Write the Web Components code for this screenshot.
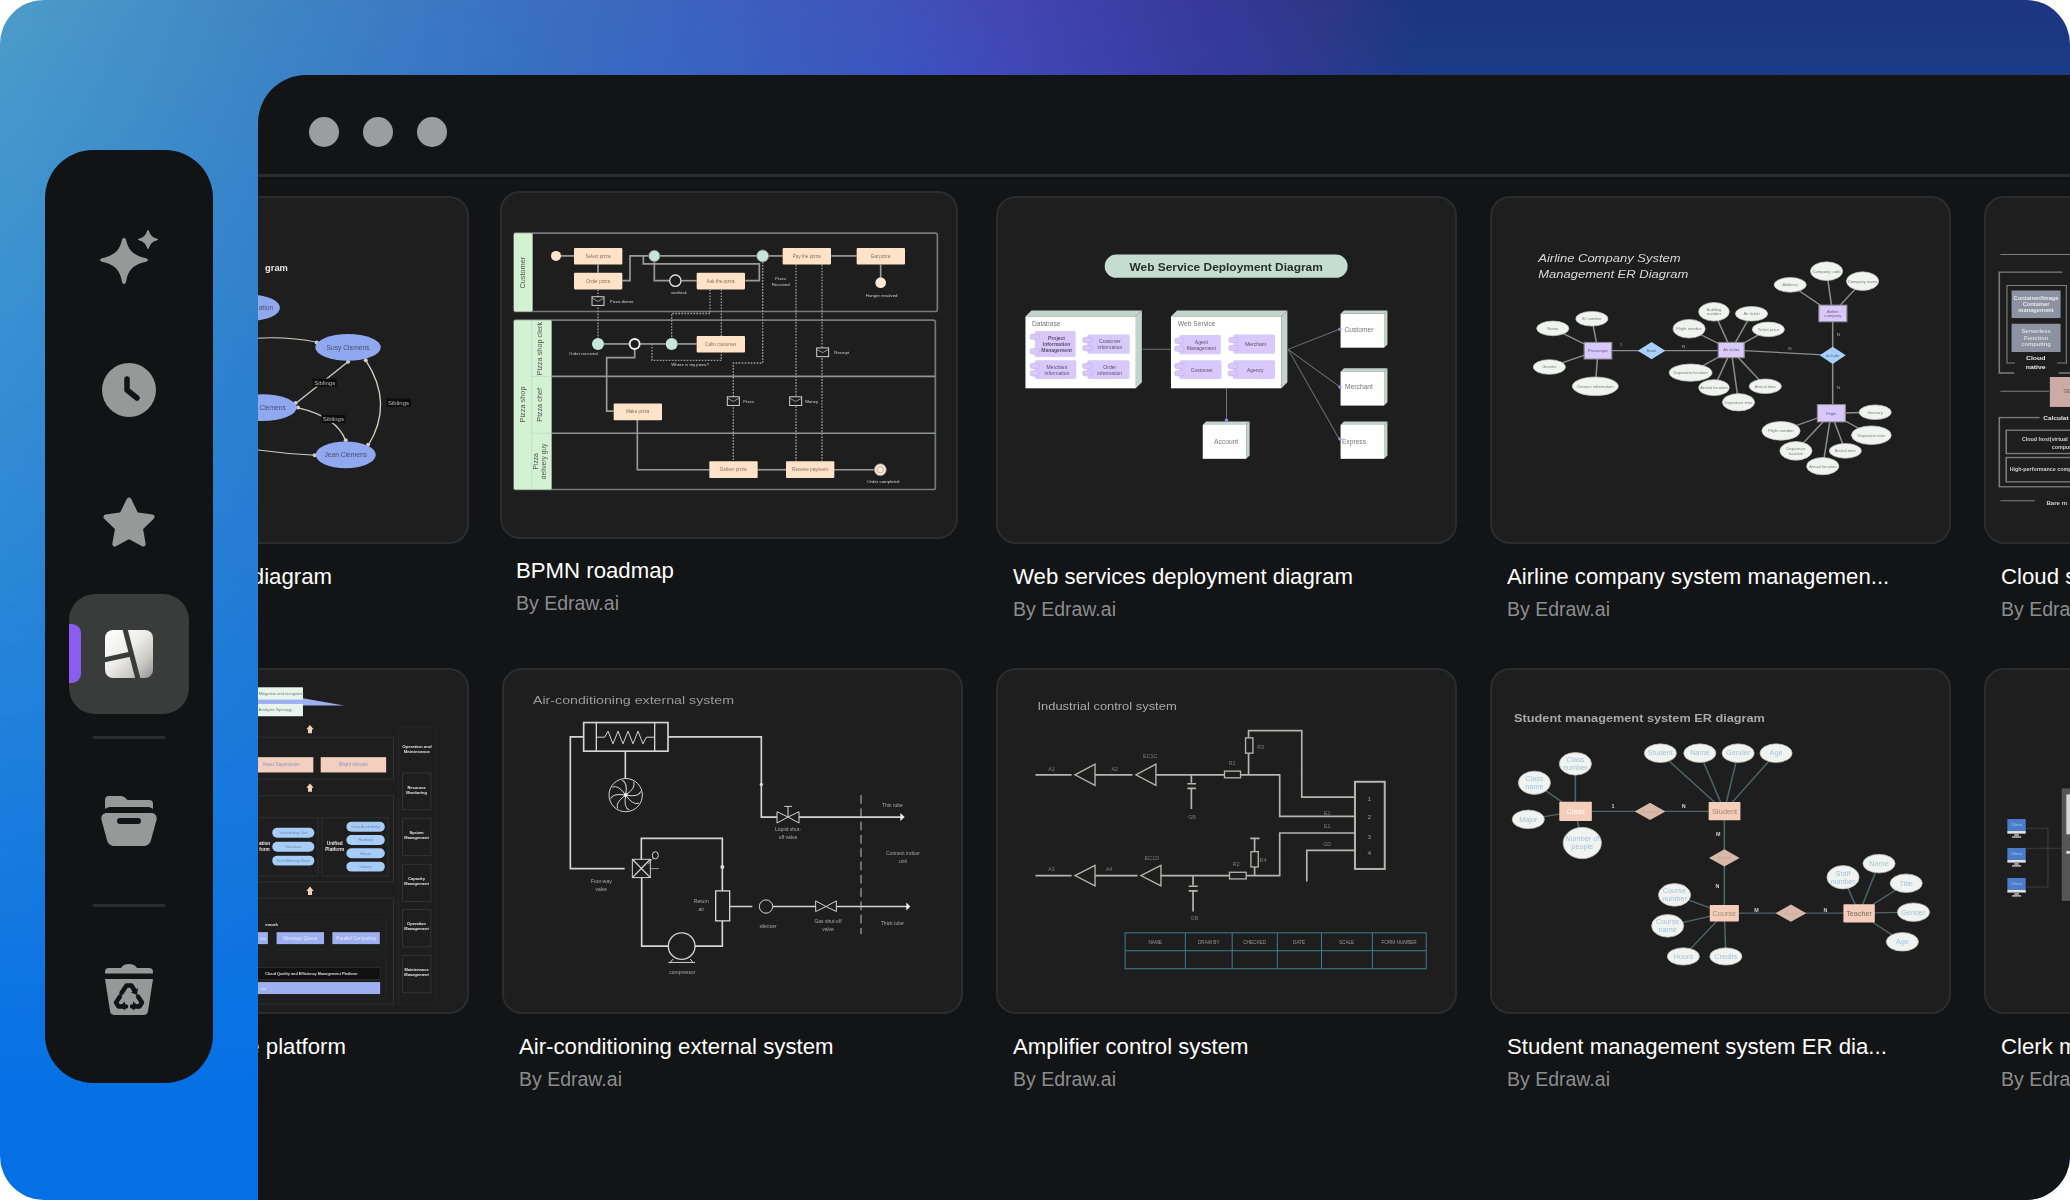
<!DOCTYPE html>
<html lang="en">
<head>
<meta charset="utf-8">
<title>Templates</title>
<style>
  html, body { margin: 0; background: #fff; }
</style>
</head>
<body>
<app-frame>
  <side-rail slot="rail">
    <rail-item>
      <svg width="58" height="56" viewBox="0 0 58 56">
        <path fill="#979999" d="M24 8c1.3 0 2 1 2.400 3 1.800 8.600 7.200 14 16.600 16.400 3 .7 5 1.300 5 2.600s-2 1.900-5 2.600C33.600 35 28.200 40.400 26.400 50c-.4 2.500-1.100 4-2.400 4s-2-1.500-2.400-4C19.800 40.400 14.400 35 5 32.600 2 31.900 0 31.300 0 30s2-1.900 5-2.600C14.400 25 19.800 19.600 21.600 11c.4-2 1.100-3 2.400-3z"/>
        <path fill="#979999" d="M48 0c.6 0 .9.700 1.300 1.900.9 3 3.300 5.300 7.100 6.500 1 .4 1.600.6 1.600 1.100s-.6.800-1.600 1.100c-3.800 1.200-6.200 3.500-7.100 6.500-.4 1.200-.7 1.900-1.300 1.900s-.9-.7-1.300-1.900c-.9-3-3.300-5.300-7.100-6.500-1-.3-1.600-.6-1.600-1.100s.6-.7 1.600-1.100c3.800-1.200 6.200-3.500 7.100-6.500C47.100.7 47.400 0 48 0z"/>
      </svg>
    </rail-item>
    <rail-item>
      <svg width="54" height="54" viewBox="0 0 54 54">
        <circle cx="27" cy="27" r="27" fill="#979999"/>
        <path d="M25 16v11l10 8" fill="none" stroke="#121315" stroke-width="5.500" stroke-linecap="round" stroke-linejoin="round"/>
      </svg>
    </rail-item>
    <rail-item>
      <svg width="52" height="50" viewBox="0 0 52 50">
        <path fill="#979999" stroke="#979999" stroke-width="5" stroke-linejoin="round" d="M26 3l7 14.600 16 2.300-11.600 11.200 2.800 16L26 39.400 11.800 47.100l2.800-16L3 19.900l16-2.300z"/>
      </svg>
    </rail-item>
    <rail-item active>
      <svg width="48" height="48" viewBox="0 0 48 48">
        <defs>
          <linearGradient id="logoFill" x1="0" y1="0" x2="1" y2="1">
            <stop offset="0" stop-color="#ffffff"/>
            <stop offset=".45" stop-color="#ededea"/>
            <stop offset=".75" stop-color="#c9c6c2"/>
            <stop offset="1" stop-color="#8f9090"/>
          </linearGradient>
        </defs>
        <rect width="48" height="48" rx="8" fill="url(#logoFill)"/>
        <path d="M20 -1L33 49" stroke="#3a3b3b" stroke-width="5" fill="none"/>
        <path d="M-1 30L26 24" stroke="#3a3b3b" stroke-width="5" fill="none"/>
      </svg>
    </rail-item>
    <rail-divider></rail-divider>
    <rail-item>
      <svg width="56" height="50" viewBox="0 0 56 50">
        <path fill="#979999" d="M4 13V4a4 4 0 0 1 4-4h12c2 0 3 .7 4.500 2l2 2H48a4 4 0 0 1 4 4v5c-2-1.500-4-2-6-2H10c-2 0-4 .5-6 2z"/>
        <path fill="#979999" d="M6 17h44c4 0 6.500 3 5.500 7L50 44c-1 4-4 6-8 6H14c-4 0-7-2-8-6L.5 24C-.5 20 2 17 6 17z"/>
        <rect x="16" y="22" width="24" height="6" rx="3" fill="#121315"/>
      </svg>
    </rail-item>
    <rail-divider style="margin-top:11px"></rail-divider>
    <rail-item>
      <svg width="48" height="51" viewBox="0 0 48 51">
        <path fill="#979999" d="M16 4c1.500-2.500 4-4 8-4s6.500 1.500 8 4h12a4 4 0 0 1 4 4v1.500H0V8a4 4 0 0 1 4-4z"/>
        <path fill="#979999" d="M0 15h48l-5 32c-.4 2.500-2 4-4.500 4h-29C7 51 5.400 49.500 5 47z"/>
        <g fill="none" stroke="#121315" stroke-width="4.500" stroke-linecap="round" stroke-linejoin="round">
          <path d="M16.500 29l5-7.500h5l3 5"/>
          <path d="M15 32.500l-4 6 2.500 4H21"/>
          <path d="M33 32.500l4 6-2.500 4H27"/>
        </g>
        <g fill="#121315">
          <path d="M33 24l-1 7-6-2.500z"/>
          <path d="M20 37.500v9l-5.500-4.500z"/>
          <path d="M28 37.500v9l5.500-4.500z"/>
        </g>
      </svg>
    </rail-item>
  </side-rail>

  <app-window slot="main">
    <template-card clipped author="" style="--name-width:307px" name="diagram"><diagram-thumb kind="family"></diagram-thumb></template-card>
    <template-card lifted name="BPMN roadmap"><diagram-thumb kind="bpmn"></diagram-thumb></template-card>
    <template-card name="Web services deployment diagram"><diagram-thumb kind="deploy"></diagram-thumb></template-card>
    <template-card name="Airline company system managemen..."><diagram-thumb kind="airline"></diagram-thumb></template-card>
    <template-card name="Cloud service architecture"><diagram-thumb kind="cloud"></diagram-thumb></template-card>
    <template-card clipped author="" style="--name-width:321px;--thumb-h:346px" name="e platform"><diagram-thumb kind="platform"></diagram-thumb></template-card>
    <template-card style="--thumb-h:346px" name="Air-conditioning external system"><diagram-thumb kind="aircon"></diagram-thumb></template-card>
    <template-card style="--thumb-h:346px" name="Amplifier control system"><diagram-thumb kind="amp"></diagram-thumb></template-card>
    <template-card style="--thumb-h:346px" name="Student management system ER dia..."><diagram-thumb kind="student"></diagram-thumb></template-card>
    <template-card style="--thumb-h:346px" name="Clerk management network"><diagram-thumb kind="clerk"></diagram-thumb></template-card>
  </app-window>
</app-frame>

<script>
class AppFrame extends HTMLElement {
    constructor() {
        super();
        this.shadow = this.attachShadow({ mode: 'open' });
    }

    connectedCallback() {
        this.shadow.innerHTML = `
            <style>
                :host {
                    display: grid;
                    grid-template-columns: 258px 1fr;
                    width: 2070px;
                    height: 1200px;
                    border-radius: 44px;
                    overflow: hidden;
                    background:
                        linear-gradient(180deg, rgba(5,112,230,0) 0%, rgba(5,112,230,.5) 50%, #0570e6 92%),
                        linear-gradient(90deg, #4c9cc9 0, #3f86c4 260px, #3a70c0 520px, #3f52bc 900px, #4345b4 1010px, #38389a 1200px, #2f3688 1320px, #1c3680 1420px, #1c3680 100%);
                }
                .left {
                    padding: 150px 0 0 45px;
                }
                .right {
                    padding-top: 75px;
                    min-width: 0;
                    display: flex;
                }
            </style>
            <div class="left"><slot name="rail"></slot></div>
            <div class="right"><slot name="main"></slot></div>
        `;
    }
}

class SideRail extends HTMLElement {
    constructor() {
        super();
        this.shadow = this.attachShadow({ mode: 'open' });
    }

    connectedCallback() {
        this.shadow.innerHTML = `
            <style>
                :host {
                    display: flex;
                    flex-direction: column;
                    align-items: center;
                    gap: 12px;
                    box-sizing: border-box;
                    width: 168px;
                    height: 933px;
                    padding-top: 48px;
                    border-radius: 48px;
                    background: #121315;
                }
            </style>
            <slot></slot>
        `;
    }
}

class RailItem extends HTMLElement {
    constructor() {
        super();
        this.shadow = this.attachShadow({ mode: 'open' });
    }

    connectedCallback() {
        this.shadow.innerHTML = `
            <style>
                :host {
                    position: relative;
                    display: flex;
                    flex: none;
                    align-items: center;
                    justify-content: center;
                    width: 120px;
                    height: 120px;
                    border-radius: 26px;
                }
                :host([active]) {
                    background: #3a3b3b;
                }
                :host([active])::before {
                    content: '';
                    position: absolute;
                    left: 0;
                    top: 30px;
                    width: 12px;
                    height: 59px;
                    border-radius: 0 9px 9px 0;
                    background: #8b5cf0;
                }
            </style>
            <slot></slot>
        `;
    }
}

class RailDivider extends HTMLElement {
    constructor() {
        super();
        this.shadow = this.attachShadow({ mode: 'open' });
    }

    connectedCallback() {
        this.shadow.innerHTML = `
            <style>
                :host {
                    display: block;
                    flex: none;
                    width: 72px;
                    height: 3px;
                    margin: 10px 0;
                    background: #2a2b2d;
                }
            </style>
        `;
    }
}

class AppWindow extends HTMLElement {
    constructor() {
        super();
        this.shadow = this.attachShadow({ mode: 'open' });
    }

    connectedCallback() {
        this.shadow.innerHTML = `
            <style>
                :host {
                    display: block;
                    flex: 1;
                    min-width: 0;
                    overflow: hidden;
                    border-radius: 48px 0 0 0;
                    background: #131415;
                }
                .bar {
                    display: flex;
                    gap: 24px;
                    padding: 42px 0 27px 51px;
                    border-bottom: 3px solid #2a2b2d;
                }
                .dot {
                    width: 30px;
                    height: 30px;
                    border-radius: 50%;
                    background: #9b9e9f;
                }
                .grid {
                    display: grid;
                    grid-template-columns: repeat(5, 461px);
                    gap: 46px 33px;
                    margin-left: -250px;
                    padding-top: 19px;
                }
            </style>
            <div class="bar">
                <span class="dot"></span>
                <span class="dot"></span>
                <span class="dot"></span>
            </div>
            <div class="grid"><slot></slot></div>
        `;
    }
}

class TemplateCard extends HTMLElement {
    constructor() {
        super();
        this.shadow = this.attachShadow({ mode: 'open' });
    }

    connectedCallback() {
        const name = this.getAttribute('name');
        const author = this.hasAttribute('author') ? this.getAttribute('author') : 'By Edraw.ai';
        this.shadow.innerHTML = `
            <style>
                :host {
                    display: block;
                    min-width: 0;
                    font-family: "Liberation Sans", Arial, sans-serif;
                }
                :host([lifted]) {
                    transform: translate(-2px, -5px);
                }
                :host([lifted]) .thumb {
                    width: 458px;
                }
                :host([lifted]) .name {
                    margin: 17px 0 0 16px;
                }
                :host([lifted]) .by {
                    margin-left: 16px;
                }
                .thumb {
                    height: var(--thumb-h, 348px);
                    overflow: hidden;
                    border-radius: 20px;
                    background: #1e1e1f;
                    box-shadow: inset 0 0 0 2px #2b2c2d;
                }
                .name {
                    margin: 18px 0 0 17px;
                    font-size: 22.2px;
                    line-height: 30px;
                    color: #fff;
                    white-space: nowrap;
                }
                :host([clipped]) .name {
                    width: var(--name-width);
                    text-align: right;
                }
                .by {
                    min-height: 26px;
                    margin: 4px 0 0 17px;
                    font-size: 19.5px;
                    line-height: 26px;
                    color: #8b8d8f;
                    white-space: nowrap;
                }
            </style>
            <div class="thumb"><slot></slot></div>
            <div class="name">${name}</div>
            <div class="by">${author}</div>
        `;
    }
}

// small svg helpers, coordinates are the ones read off the zoomed reference
const txt = (x, y, s, o = {}) => `<text x="${x}" y="${y}" font-size="${o.size || 14}" fill="${o.fill || '#c8c8c8'}"
    text-anchor="${o.anchor || 'middle'}" dominant-baseline="central"
    font-weight="${o.bold ? 700 : 400}" font-style="${o.italic ? 'italic' : 'normal'}"
    ${o.len ? `textLength="${o.len}" lengthAdjust="spacingAndGlyphs"` : ''}
    ${o.rot ? `transform="rotate(${o.rot} ${x} ${y})"` : ''}>${s}</text>`;
const lines = (x, y, s, o = {}) => {
    const parts = s.split('|');
    const step = o.step || (o.size || 14) * 1.25;
    return parts.map((p, i) => txt(x, y + (i - (parts.length - 1) / 2) * step, p, o)).join('');
};
const box = (x1, y1, x2, y2, fill = 'none', stroke = 'none', sw = 2, r = 0) =>
    `<rect x="${x1}" y="${y1}" width="${x2 - x1}" height="${y2 - y1}" rx="${r}" fill="${fill}" stroke="${stroke}" stroke-width="${sw}"/>`;
const ell = (cx, cy, rx, ry, fill = 'none', stroke = 'none', sw = 2) =>
    `<ellipse cx="${cx}" cy="${cy}" rx="${rx}" ry="${ry}" fill="${fill}" stroke="${stroke}" stroke-width="${sw}"/>`;
const line = (d, stroke = '#888', sw = 3, dash = '') =>
    `<path d="${d}" fill="none" stroke="${stroke}" stroke-width="${sw}" ${dash ? `stroke-dasharray="${dash}"` : ''}/>`;
const poly = (pts, fill = 'none', stroke = 'none', sw = 2) =>
    `<polygon points="${pts}" fill="${fill}" stroke="${stroke}" stroke-width="${sw}"/>`;
const diamond = (cx, cy, rx, ry, fill, stroke = 'none') =>
    poly(`${cx - rx},${cy} ${cx},${cy - ry} ${cx + rx},${cy} ${cx},${cy + ry}`, fill, stroke);

const er = (hx, hy, items, o) => items.map(([cx, cy, rx, ry]) =>
    line(`M${hx} ${hy}L${cx} ${cy}`, o.line, 4)).join('') +
    items.map(([cx, cy, rx, ry, s]) =>
        ell(cx, cy, rx, ry, o.fill, o.stroke, 2) + lines(cx, cy, s, { size: o.size, fill: o.text })).join('');

const DIAGRAMS = {
    family: {
        view: '-726 16 1380 1046',
        draw() {
            const blue = '#8fa8f0';
            const ink = '#47506e';
            const edge = '#cfcfc8';
            const tip = (x, y) => ell(x, y, 6, 6, edge);
            return txt(112, 233, 'gram', { size: 28, fill: '#e8e8e8', anchor: 'end', bold: true })
                + line('M-60 450Q90 432 200 456', edge, 3)
                + line('M-40 770Q80 790 195 795', edge, 3)
                + line('M292 514L135 640', edge, 4)
                + line('M140 652Q260 680 285 752', edge, 4)
                + line('M345 510Q430 640 352 766', edge, 4)
                + tip(292, 514) + tip(135, 638) + tip(142, 652) + tip(285, 750) + tip(345, 510) + tip(352, 764) + tip(198, 456) + tip(192, 795)
                + ell(292, 471, 98, 40, blue) + txt(292, 471, 'Susy Clemens', { size: 20, fill: ink })
                + ell(285, 794, 90, 40, blue) + txt(285, 794, 'Jean Clemens', { size: 20, fill: ink })
                + ell(36, 652, 102, 40, blue) + txt(66, 652, 'Clemens', { size: 20, fill: ink })
                + ell(0, 352, 88, 39, blue) + txt(46, 352, 'ation', { size: 20, fill: ink })
                + [[222, 577], [248, 686], [443, 637]].map(([x, y]) =>
                    box(x - 36, y - 12, x + 36, y + 12, '#0c0c0c') + txt(x, y, 'Siblings', { size: 18, fill: '#bdbdbd' })).join('');
        }
    },

    bpmn: {
        view: '60 64 1374 1040',
        draw() {
            const g = '#d3f2d4';
            const peach = '#ffe3c8';
            const ln = '#9a9a98';
            const ink = '#8a6d5a';
            const tasks = [[282, 234, 'Select pizza'], [282, 308, 'Order pizza'], [650, 308, 'Ask the pizza'], [908, 234, 'Pay the pizza'],
                [1130, 234, 'Eat pizza'], [650, 497, 'Calm customer'], [401, 699, 'Make pizza'], [688, 872, 'Deliver pizza'], [918, 872, 'Receive payment']];
            const paths = ['M228 258H282', 'M354 284V308', 'M427 332H450V258H505', 'M540 258H830', 'M866 258H908', 'M1054 258H1130', 'M1202 284V322',
                'M523 275V332H568', 'M604 332H650', 'M796 332H838V282H490V258', 'M372 521H446', 'M482 521H557', 'M593 521H650', 'M464 539V562H380V722H401',
                'M472 748V897H688', 'M832 897H918', 'M1062 897H1183'];
            const dashed = ['M354 358V503', 'M690 358V430H575V503', 'M724 358V497', 'M848 276V578H760V872', 'M948 284V872', 'M1026 284V872', 'M516 521V570H724V547'];
            const env = (x, y) => box(x - 18, y - 13, x + 18, y + 13, '#1e1e1f', '#cfcfcf', 3) + line(`M${x - 18} ${y - 9}L${x} ${y + 1}L${x + 18} ${y - 9}`, '#cfcfcf', 2);
            const small = [[425, 395, 'Pizza dinner'], [597, 367, 'wait/ask'], [902, 335, 'Pizza|Received'], [1205, 375, 'Hunger resolved'], [310, 551, 'Order received'],
                [630, 583, 'Where is my pizza?'], [1085, 547, 'Receipt'], [806, 692, 'Pizza'], [995, 692, 'Money'], [1210, 933, 'Order completed']];
            return box(102, 190, 1372, 424, 'none', '#777879', 5, 6)
                + box(102, 450, 1366, 956, 'none', '#777879', 5, 6)
                + line('M215 618H1366M215 788H1366', '#929394', 5)
                + box(102, 190, 158, 424, g, 'none', 0, 4) + box(102, 450, 215, 956, g, 'none', 0, 4)
                + line('M155 450V956M155 618H215M155 788H215', '#9cbfa0', 2, '3 3')
                + txt(128, 308, 'Customer', { size: 22, fill: '#555', rot: -90 })
                + txt(128, 702, 'Pizza shop', { size: 22, fill: '#555', rot: -90 })
                + txt(180, 535, 'Pizza shop clerk', { size: 22, fill: '#555', rot: -90 })
                + txt(180, 703, 'Pizza chef', { size: 22, fill: '#555', rot: -90 })
                + txt(168, 872, 'Pizza', { size: 20, fill: '#555', rot: -90 })
                + txt(192, 872, 'delivery guy', { size: 20, fill: '#555', rot: -90 })
                + paths.map(d => line(d, ln, 5)).join('')
                + dashed.map(d => line(d, ln, 4, '5 4')).join('')
                + tasks.map(([x, y, s]) => box(x, y, x + 145, y + 50, peach, 'none', 0, 3) + txt(x + 72, y + 25, s, { size: 14, fill: ink })).join('')
                + ell(228, 258, 15, 15, peach) + ell(1202, 338, 16, 16, '#ffe9d6')
                + ell(523, 258, 17, 17, '#c7e6d8', '#777', 2) + ell(848, 258, 18, 18, '#c7e6d8', '#888', 2)
                + ell(586, 332, 17, 17, '#1e1e1f', '#e6e6e6', 4)
                + ell(354, 521, 18, 18, '#c7e6d8') + ell(575, 521, 18, 18, '#c7e6d8')
                + ell(464, 521, 15, 15, '#1e1e1f', '#eeeeee', 6)
                + ell(1201, 897, 18, 18, '#ffe3c8', '#888', 2) + ell(1201, 897, 9, 9, '#f6efe6', '#999', 2)
                + [[354, 393], [1028, 546], [760, 692], [947, 692]].map(([x, y]) => env(x, y)).join('')
                + small.map(([x, y, s]) => lines(x, y, s, { size: 13, fill: '#d0d0d0' })).join('');
        }
    },

    deploy: {
        view: '52 76 1378 1046',
        draw() {
            const side = '#c3d4ca';
            const node = (x1, y1, x2, y2, d) =>
                poly(`${x1},${y1} ${x1 + d},${y1 - d} ${x2 + d},${y1 - d} ${x2},${y1}`, side)
                + poly(`${x2},${y1} ${x2 + d},${y1 - d} ${x2 + d},${y2 - d} ${x2},${y2}`, side)
                + box(x1, y1, x2, y2, '#ffffff');
            const comp = (x1, y1, x2, y2, s, bold) =>
                box(x1, y1, x2, y2, '#d8c8fb', 'none', 0, 5)
                + box(x1 - 14, y1 + 9, x1 + 14, y1 + 25, '#d8c8fb', '#b9a8e6', 1.500, 6)
                + box(x1 - 14, y2 - 25, x1 + 14, y2 - 9, '#d8c8fb', '#b9a8e6', 1.500, 6)
                + lines((x1 + x2) / 2 + 4, (y1 + y2) / 2, s, { size: 15, fill: '#5a5368', bold });
            return box(377, 252, 1103, 322, '#c5dcd0', 'none', 0, 35)
                + txt(740, 290, 'Web Service Deployment Diagram', { size: 33, fill: '#26302b', bold: true, len: 578 })
                + line('M490 537H575M925 537L1080 476M925 537L1080 650M925 537L1080 810M741 654V750', '#6f7173', 3)
                + node(140, 438, 470, 654, 18) + node(575, 438, 905, 654, 18)
                + node(1082, 430, 1212, 532, 10) + node(1082, 604, 1212, 706, 10) + node(1082, 764, 1212, 866, 10) + node(670, 764, 800, 866, 10)
                + txt(202, 458, 'Database', { size: 20, fill: '#777' }) + txt(652, 458, 'Web Service', { size: 20, fill: '#777' })
                + txt(1137, 476, 'Customer', { size: 20, fill: '#777' }) + txt(1137, 648, 'Merchant', { size: 20, fill: '#777' })
                + txt(1122, 814, 'Express', { size: 20, fill: '#777' }) + txt(740, 814, 'Account', { size: 20, fill: '#777' })
                + comp(168, 482, 290, 560, 'Project|Information|Management', true)
                + comp(325, 492, 452, 550, 'Customer|information')
                + comp(168, 570, 292, 626, 'Merchant|information')
                + comp(325, 570, 451, 626, 'Order|information')
                + comp(600, 494, 724, 552, 'Agent|Management')
                + comp(762, 492, 886, 550, 'Merchant')
                + comp(600, 570, 726, 626, 'Customer')
                + comp(760, 570, 886, 626, 'Agency')
                + [[1080, 476], [1080, 650], [1080, 806], [741, 750]].map(([x, y]) => ell(x, y, 5, 5, '#8a90e8')).join('');
        }
    },

    airline: {
        view: '52 76 1204 1046',
        draw() {
            const o = { fill: '#f0f3f0', stroke: '#c4cac4', line: '#8d8d8d', size: 11, text: '#808080' };
            const entity = (x1, y1, x2, y2, s) => box(x1, y1, x2, y2, '#d8c8fb', '#8e8e8e', 3) + lines((x1 + x2) / 2, (y1 + y2) / 2, s, { size: 11, fill: '#6a6080' });
            const rel = (x, y, rx, ry, s) => diamond(x, y, rx, ry, '#a8d0ff') + txt(x, y, s, { size: 11, fill: '#5a6a88' });
            return txt(178, 263, 'Airline Company System', { size: 35, fill: '#d8d8d8', anchor: 'start', italic: true, len: 372 })
                + txt(178, 312, 'Management ER Diagram', { size: 35, fill: '#d8d8d8', anchor: 'start', italic: true, len: 392 })
                + line('M370 541H648M716 541L947 555M947 454V703', '#8d8d8d', 4)
                + er(334, 541, [[216, 474, 42, 22, 'Name'], [318, 445, 42, 22, 'ID number'], [207, 590, 42, 22, 'Gender'], [327, 648, 60, 28, 'Contact information']], o)
                + er(682, 539, [[637, 424, 40, 28, 'Building|number'], [735, 430, 42, 22, 'Air ticket'], [779, 477, 42, 22, 'Ticket price'], [572, 475, 42, 28, 'Flight number'],
                    [576, 607, 56, 26, 'Departure location'], [637, 652, 40, 24, 'Arrival location'], [771, 648, 42, 22, 'Arrival time'], [701, 696, 42, 26, 'Departure time']], o)
                + er(947, 429, [[836, 343, 42, 22, 'Address'], [931, 302, 42, 28, 'Company code'], [1025, 332, 42, 28, 'Company name']], o)
                + er(943, 729, [[1058, 726, 42, 22, 'Itinerary'], [812, 782, 50, 28, 'Flight number'], [1048, 795, 52, 28, 'Departure time'],
                    [851, 842, 42, 28, 'Departure|location'], [980, 842, 42, 22, 'Arrival time'], [921, 888, 42, 26, 'Arrival location']], o)
                + entity(298, 516, 370, 566, 'Passenger') + entity(648, 516, 716, 562, 'Air ticket')
                + entity(911, 404, 984, 454, 'Airline|company') + entity(907, 703, 980, 755, 'Flight')
                + rel(474, 541, 36, 26, 'Book') + rel(947, 555, 34, 26, 'Include')
                + [[394, 522, '1'], [558, 530, 'N'], [835, 535, 'N'], [962, 494, 'N'], [962, 652, 'N']].map(([x, y, s]) => txt(x, y, s, { size: 12, fill: '#a8a8a8' })).join('');
        }
    },

    cloud: {
        view: '1345 76 1204 1046',
        draw() {
            const st = '#7d7d7d';
            return line('M1388 252H1700', st, 3)
                + line('M1550 305H1385V608H1424M1540 608H1700', st, 4)
                + box(1405, 345, 1560, 578, 'none', st, 3)
                + box(1417, 360, 1545, 443, '#8c92a2') + lines(1481, 401, 'Container/Image|Container|management', { size: 15, fill: '#e8e8e8', bold: true })
                + box(1417, 460, 1545, 545, '#8c92a2') + lines(1481, 502, 'Serverless|Function|computing', { size: 15, fill: '#dcdcdc', bold: true })
                + box(1426, 553, 1536, 604, '#1e1e1f') + lines(1480, 576, 'Cloud|native', { size: 18, fill: '#e8e8e8', bold: true, step: 28 })
                + line('M1388 663H1515', st, 3)
                + box(1517, 620, 1700, 710, '#ccaaa5')
                + txt(1552, 664, 'SE', { size: 14, fill: '#7a5c58', anchor: 'start' })
                + box(1385, 742, 1700, 950, 'none', st, 4)
                + box(1490, 730, 1700, 758, '#1e1e1f')
                + txt(1500, 743, 'Calculat', { size: 17, fill: '#e0e0e0', anchor: 'start', bold: true })
                + box(1403, 780, 1700, 850, 'none', st, 4)
                + txt(1444, 806, 'Cloud host(virtual', { size: 14, fill: '#d0d0d0', anchor: 'start', bold: true })
                + txt(1522, 832, 'comput', { size: 14, fill: '#d0d0d0', anchor: 'start', bold: true })
                + box(1403, 862, 1700, 935, 'none', st, 4)
                + txt(1412, 898, 'High-performance comp', { size: 14, fill: '#d0d0d0', anchor: 'start', bold: true })
                + line('M1388 992H1478', st, 3)
                + txt(1508, 998, 'Bare m', { size: 16, fill: '#d0d0d0', anchor: 'start', bold: true });
        }
    },

    platform: {
        view: '-726 20 1380 1040',
        draw() {
            const purple = '#9fb0f0';
            const pill = '#a5cdf8';
            const edge = '#2f3031';
            const arrow = (x, y) => poly(`${x},${y - 13} ${x + 11},${y} ${x + 6},${y} ${x + 6},${y + 12} ${x - 6},${y + 12} ${x - 6},${y} ${x - 11},${y}`, '#f6cfba');
            const pills = (x1, x2, list) => list.map(([y, s]) => box(x1, y, x2, y + 30, pill, 'none', 0, 15) + txt((x1 + x2) / 2, y + 15, s, { size: 12, fill: '#7386a8' })).join('');
            const ops = [[336, 446, 'Resource|Monitoring'], [472, 584, 'System|Management'], [610, 722, 'Capacity|Management'], [746, 858, 'Operation|Management'], [884, 996, 'Maintenance|Management']];
            return poly('-300,30 280,133 -300,133', purple)
                + box(-300, 78, 157, 115, '#e8f5ee') + txt(92, 96, 'Mitigation and recogntion', { size: 12, fill: '#777' })
                + box(-300, 128, 157, 165, '#e8f5ee') + txt(74, 146, 'Analysis Synergy', { size: 13, fill: '#777' })
                + arrow(178, 204) + arrow(178, 380) + arrow(178, 690)
                + box(-700, 228, 428, 354, 'none', edge, 3)
                + box(-300, 288, 188, 334, '#f3cfc0') + txt(92, 311, 'Asset Supervision', { size: 14, fill: '#8d93c4' })
                + box(210, 288, 406, 334, '#f3cfc0') + txt(308, 311, 'Bright division', { size: 14, fill: '#8d93c4' })
                + box(-700, 404, 428, 663, 'none', edge, 3)
                + box(-300, 470, 202, 645, 'none', edge, 3) + box(214, 470, 412, 645, 'none', edge, 3)
                + lines(42, 556, 'ation|form', { size: 14, fill: '#e8e8e8', bold: true })
                + lines(252, 556, 'Unified|Platform', { size: 14, fill: '#e8e8e8', bold: true })
                + pills(65, 191, [[500, 'Scheduling Unit'], [542, 'Structure'], [584, 'Task Memory Base']])
                + pills(287, 402, [[482, 'Data Availability'], [522, 'Hadoop'], [562, 'Hbase'], [602, 'Library']])
                + box(-700, 712, 428, 1030, 'none', edge, 3)
                + box(-500, 770, 405, 865, 'none', '#272829', 2) + box(-500, 880, 405, 1015, 'none', '#272829', 2)
                + txt(82, 790, 'ework', { size: 13, fill: '#e0e0e0', anchor: 'end', bold: true })
                + box(-200, 814, 52, 850, purple) + txt(38, 832, 'ble', { size: 13, fill: '#e4e6ff' })
                + box(78, 814, 220, 850, purple) + txt(149, 832, 'Message Queue', { size: 14, fill: '#e4e6ff' })
                + box(245, 814, 387, 850, purple) + txt(316, 832, 'Parallel Computing', { size: 14, fill: '#e4e6ff' })
                + box(-300, 920, 388, 956, '#111', '#333', 2) + txt(182, 938, 'Cloud Quality and Efficiency Management Platform', { size: 13, fill: '#dcdcdc', bold: true, len: 276 })
                + box(-300, 964, 388, 1000, purple) + txt(38, 982, 'ata', { size: 13, fill: '#e4e6ff' })
                + box(442, 200, 558, 1030, 'none', '#262728', 3)
                + lines(498, 264, 'Operation and|Maintenance', { size: 13, fill: '#e0e0e0', bold: true })
                + ops.map(([y1, y2, s]) => box(455, y1, 540, y2, 'none', '#333', 3) + lines(497, (y1 + y2) / 2 - 5, s, { size: 12, fill: '#e8e8e8', bold: true })).join('');
        }
    },

    aircon: {
        view: '67 50 1383 1040',
        draw() {
            const c = '#d4d4d4';
            const small = [[1238, 462, 'Thin tube'], [925, 547, 'Liquid shut-|off valve'], [1270, 619, 'Connect indoor|unit'], [365, 703, 'Four-way|valve'], [665, 762, 'Return|air'],
                [865, 827, 'silencer'], [1045, 823, 'Gas shut-off|valve'], [1238, 818, 'Thick tube'], [608, 965, 'compressor']];
            let blades = '';
            for (let i = 0; i < 8; i++) blades += `<path d="M438 432Q470 410 462 392" transform="rotate(${i * 45} 438 432)" fill="none" stroke="${c}" stroke-width="3"/>`;
            return txt(160, 147, 'Air-conditioning external system', { size: 34, fill: '#9a9a9a', anchor: 'start', len: 603 })
                + line('M312 257H272V653H435M565 257H845V498H892M958 498H1265M437 300V382M485 625V562H728V720M486 680V886H568M646 886H728V810M750 767H818M880 767H1008M1070 767H1285', c, 5)
                + box(312, 214, 565, 300, 'none', c, 5) + line('M350 214V300M525 214V300', c, 4)
                + line('M352 258H375L385 240L400 278L415 240L430 278L445 240L460 278L475 240L490 278L500 258H525', c, 3)
                + ell(438, 432, 50, 50, 'none', c, 3) + blades + ell(438, 432, 6, 6, '#eee')
                + ell(845, 400, 5, 5, '#ddd') + ell(728, 648, 6, 6, '#ddd')
                + poly('892,482 925,498 892,516', 'none', c, 3) + poly('958,482 925,498 958,516', 'none', c, 3) + line('M925 498V466M914 466H937', c, 3)
                + poly('1262,486 1275,498 1262,510', '#eee') + poly('1280,755 1292,767 1280,779', '#eee')
                + line('M1144 432V850', '#c0c0c0', 3, '26 14')
                + box(458, 625, 512, 680, 'none', c, 3) + line('M458 625L512 680M512 625L458 680', c, 4)
                + line('M505 640L522 620M512 653H538', c, 2) + ell(527, 613, 9, 11, 'none', c, 3)
                + box(708, 720, 750, 810, '#1e1e1f', c, 4)
                + ell(859, 767, 20, 20, 'none', c, 3)
                + ell(606, 886, 40, 40, '#1e1e1f', c, 4) + line('M566 935H646M580 925L572 935M632 925L640 935', c, 3)
                + poly('1008,750 1039,767 1008,782', 'none', c, 3) + poly('1070,750 1039,767 1070,782', 'none', c, 3)
                + small.map(([x, y, s]) => lines(x, y, s, { size: 15, fill: '#a8a8a8', step: 24 })).join('');
        }
    },

    amp: {
        view: '52 50 1378 1040',
        draw() {
            const c = '#b4b4b0';
            const wires = 'M170 371H278M348 371H460M530 371H735M783 371H900V496H1125M636 371V395M624 398H650M624 412H650M636 412V474M807 371V305M807 260V238H966V438H1125'
                + 'M170 674H278M348 674H475M545 674H750M800 674H900V546H1125M641 674V703M628 706H655M628 720H655M641 720V782M825 674V648M825 602V562M812 562H840M981 692V598H1125';
            const tri = (x, y, w, h) => poly(`${x},${y} ${x + w},${y - h} ${x + w},${y + h}`, 'none', c, 4);
            const labels = [[218, 355, 'A1'], [407, 355, 'A2'], [513, 315, 'EC1C'], [758, 336, 'R1'], [843, 286, 'R3'], [1042, 486, 'E1'], [1042, 525, 'E1'], [1042, 578, 'GD'],
                [218, 655, 'A3'], [390, 655, 'A4'], [518, 620, 'EC1D'], [770, 639, 'R2'], [850, 626, 'R4'], [638, 497, 'GB'], [645, 801, 'GB']];
            const cols = [[528, 'NAME'], [688, 'DRAW BY'], [825, 'CHECKED'], [958, 'DATE'], [1100, 'SCALE'], [1257, 'FORM NUMBER']];
            return txt(176, 163, 'Industrial control system', { size: 34, fill: '#a8a8a8', anchor: 'start', len: 416 })
                + line(wires, c, 5)
                + tri(288, 371, 60, 32) + tri(470, 371, 60, 32) + tri(288, 674, 60, 31) + tri(485, 674, 60, 31)
                + box(735, 360, 783, 380, '#1e1e1f', c, 4) + box(750, 664, 800, 684, '#1e1e1f', c, 4)
                + box(798, 260, 820, 306, '#1e1e1f', c, 4) + box(814, 602, 836, 648, '#1e1e1f', c, 4)
                + box(1125, 392, 1214, 654, '#1e1e1f', c, 6)
                + [[445, '1'], [498, '2'], [557, '3'], [607, '4']].map(([y, s]) => txt(1168, y, s, { size: 18, fill: '#a0a0a0' })).join('')
                + labels.map(([x, y, s]) => txt(x, y, s, { size: 16, fill: '#7e7e7e' })).join('')
                + box(438, 846, 1338, 954, 'none', '#3f7d92', 3)
                + line('M438 900H1338M618 846V954M758 846V954M893 846V954M1025 846V954M1177 846V954', '#3f7d92', 3)
                + cols.map(([x, s]) => txt(x, 875, s, { size: 14, fill: '#969696' })).join('');
        }
    },

    student: {
        view: '52 50 1204 1040',
        draw() {
            const o = { fill: '#f0f3f0', stroke: '#b8bcb8', line: '#50646c', size: 19, text: '#a8c4dc' };
            const entity = (x1, y1, x2, y2, s, fill = '#a08878') => box(x1, y1, x2, y2, '#f5cdbb', 'none', 0, 2) + txt((x1 + x2) / 2, (y1 + y2) / 2, s, { size: 19, fill });
            const rel = (x, y, s) => diamond(x, y, 40, 26, '#d8b8a8') + txt(x, y, s, { size: 13, fill: '#c0a698' });
            return txt(115, 200, 'Student management system ER diagram', { size: 32, fill: '#a8a8a8', anchor: 'start', bold: true, len: 655 })
                + line('M318 481H623M664 508V762M702 787H975', '#50646c', 4)
                + er(275, 481, [[168, 395, 42, 35, 'Class|name'], [275, 338, 42, 34, 'Class|number'], [152, 505, 42, 28, 'Major'], [293, 576, 50, 47, 'Number of|people']], o)
                + er(664, 480, [[497, 306, 42, 28, 'Student'], [600, 306, 42, 28, 'Name'], [700, 306, 42, 28, 'Gender'], [799, 306, 42, 28, 'Age']], o)
                + er(664, 787, [[534, 732, 42, 34, 'Course|number'], [516, 825, 42, 34, 'Course|name'], [557, 917, 42, 26, 'Hours'], [668, 917, 42, 26, 'Credits']], o)
                + er(1016, 787, [[974, 679, 42, 35, 'Staff|number'], [1068, 638, 42, 28, 'Name'], [1139, 697, 42, 28, 'Title'], [1158, 784, 42, 28, 'Gender'], [1129, 873, 42, 28, 'Age']], o)
                + entity(233, 452, 318, 510, 'Class', '#fff') + entity(623, 453, 706, 508, 'Student') + entity(626, 762, 702, 812, 'Course') + entity(975, 760, 1057, 815, 'Teacher', '#806a5c')
                + rel(470, 481, 'Belong') + rel(664, 621, 'Select') + rel(838, 787, 'Teach')
                + [[373, 466, '1'], [558, 466, 'N'], [648, 550, 'M'], [646, 705, 'N'], [748, 778, 'M'], [928, 778, 'N']].map(([x, y, s]) => txt(x, y, s, { size: 14, fill: '#d0d0d0', bold: true })).join('');
        }
    },

    clerk: {
        view: '1345 50 1204 1040',
        draw() {
            const pc = (x, y) => box(x - 24, y - 26, x + 24, y + 10, '#4a7cc8') + txt(x, y - 8, 'Client', { size: 11, fill: '#a8c4ee' })
                + box(x - 24, y + 10, x + 24, y + 18, '#e0e0e0') + box(x - 6, y + 18, x + 6, y + 26, '#999') + box(x - 12, y + 26, x + 12, y + 30, '#ccc');
            return line('M1455 532H1512V708H1455M1455 592H1548', '#3c3c3c', 3)
                + pc(1430, 530) + pc(1430, 617) + pc(1430, 707)
                + box(1548, 412, 1800, 750, '#565656')
                + box(1560, 430, 1800, 550, '#d8d8d8')
                + box(1560, 600, 1800, 608, '#e0e0e0');
        }
    }
};

class DiagramThumb extends HTMLElement {
    constructor() {
        super();
        this.shadow = this.attachShadow({ mode: 'open' });
    }

    connectedCallback() {
        const d = DIAGRAMS[this.getAttribute('kind')];
        this.shadow.innerHTML = `
            <style>
                :host {
                    display: block;
                    height: 100%;
                }
                svg {
                    display: block;
                    width: 100%;
                    height: 100%;
                    font-family: "Liberation Sans", Arial, sans-serif;
                    filter: blur(.4px);
                }
            </style>
            <svg viewBox="${d.view}" preserveAspectRatio="none">${d.draw()}</svg>
        `;
    }
}

window.customElements.define('app-frame', AppFrame);
window.customElements.define('side-rail', SideRail);
window.customElements.define('rail-item', RailItem);
window.customElements.define('rail-divider', RailDivider);
window.customElements.define('app-window', AppWindow);
window.customElements.define('template-card', TemplateCard);
window.customElements.define('diagram-thumb', DiagramThumb);
</script>
</body>
</html>
